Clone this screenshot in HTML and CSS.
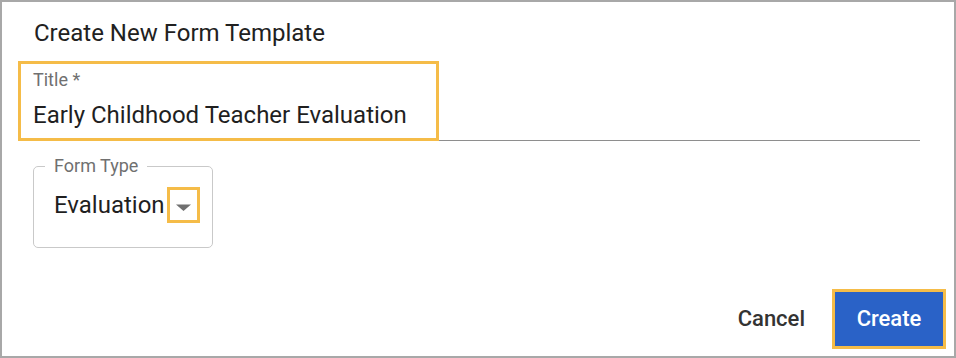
FILE: index.html
```html
<!DOCTYPE html>
<html lang="en">
<head>
<meta charset="utf-8">
<title>Create New Form Template</title>
<link rel="stylesheet" href="styles.css">
</head>
<body>
<div class="dialog">
  <h2 class="dialog-title">Create New Form Template</h2>
  <div class="content">
    <div class="text-field">
      <span class="highlight"></span>
      <label class="field-label">Title *</label>
      <div class="field-value">Early Childhood Teacher Evaluation</div>
    </div>
    <fieldset class="select-field">
      <legend class="select-legend">Form Type</legend>
      <div class="select-row">
        <span class="select-value">Evaluation</span>
        <span class="arrow-box">
          <svg class="arrow" viewBox="0 0 15 7" width="15" height="7"><path d="M0 0.5h15L7.5 7z" fill="#707070"/></svg>
        </span>
      </div>
    </fieldset>
  </div>
  <div class="actions">
    <button class="btn btn-text">Cancel</button>
    <button class="btn btn-primary">Create</button>
  </div>
</div>
</body>
</html>
```

FILE: styles.css
```css
html, body {
  margin: 0;
  padding: 0;
  background: #ffffff;
}

body {
  font-family: Roboto, "Liberation Sans", Arial, sans-serif;
  color: #202020;
}

.dialog {
  width: 956px;
  height: 358px;
  box-sizing: border-box;
  border: 2px solid #a8a8a8;
  display: flex;
  flex-direction: column;
  background: #fff;
}

.dialog-title {
  margin: 0;
  padding: 17px 0 0 32px;
  font-size: 24px;
  line-height: 28px;
  font-weight: 400;
  color: #212121;
}

.content {
  padding: 0 34px 0 31px;
  display: flex;
  flex-direction: column;
  align-items: flex-start;
}

.text-field {
  position: relative;
  align-self: stretch;
  margin-top: 22px;
  border-bottom: 1px solid #8e8e8e;
  padding-bottom: 11px;
}

.highlight {
  position: absolute;
  left: -15px;
  top: -8px;
  width: 421px;
  height: 80px;
  box-sizing: border-box;
  border: 3px solid #f5bc48;
  pointer-events: none;
}

.field-label {
  display: block;
  font-size: 18px;
  line-height: 22px;
  color: #707070;
}

.field-value {
  margin-top: 10px;
  font-size: 24px;
  line-height: 28px;
  color: #1f1f1f;
}

.select-field {
  margin: 14px 0 0 0;
  width: 180px;
  box-sizing: border-box;
  border: 1px solid #c9c9c9;
  border-radius: 5px;
  padding: 10px 8px 24px 11px;
  min-width: 0;
}

.select-legend {
  padding: 0 9px;
  font-size: 18px;
  line-height: 22px;
  color: #707070;
}

.select-row {
  display: flex;
  align-items: center;
  padding-left: 9px;
}

.select-value {
  font-size: 24px;
  line-height: 28px;
  color: #1f1f1f;
  white-space: nowrap;
}

.arrow-box {
  flex-shrink: 0;
  margin-left: 2px;
  width: 33px;
  height: 36px;
  box-sizing: border-box;
  border: 3px solid #f5bc48;
  display: flex;
  align-items: center;
  justify-content: center;
  padding-top: 5px;
}

.arrow {
  display: block;
}

.actions {
  margin-top: auto;
  display: flex;
  justify-content: flex-end;
  align-items: center;
  padding: 0 11px 10px 0;
}

.btn {
  font-family: Roboto, "Liberation Sans", Arial, sans-serif;
  font-size: 22px;
  line-height: 26px;
  font-weight: 500;
  border: none;
  background: none;
  cursor: pointer;
}

.btn-text {
  color: #333333;
  padding: 14px 12px;
  margin-right: 18px;
}

.btn-primary {
  width: 108px;
  height: 54px;
  padding: 0;
  background: #2a62c7;
  color: #ffffff;
  outline: 3px solid #f5bc48;
}
```
